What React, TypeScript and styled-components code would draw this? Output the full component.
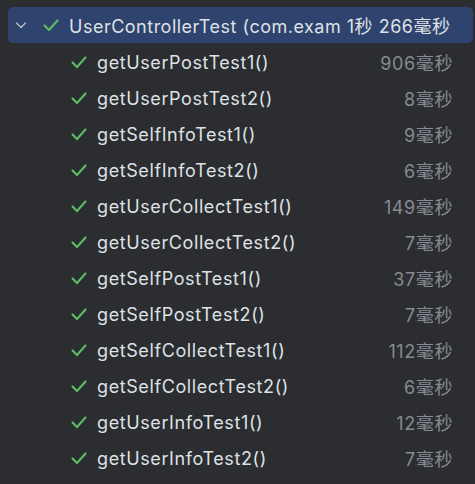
import React from "react";
import styled, { createGlobalStyle } from "styled-components";

const Global = createGlobalStyle`
  html, body { margin: 0; padding: 0; background: #2b2d30; }
  body { width: 475px; height: 484px; overflow: hidden; font-family: Inter, "Noto Sans CJK SC", sans-serif; }
`;

const Panel = styled.div`
  display: flex;
  flex-direction: column;
  padding: 7px 2px 0 8px;
  gap: 1px;
`;

const HeaderRow = styled.div`
  display: flex;
  align-items: center;
  height: 36px;
  background: #2e436e;
  border-radius: 5px;
  padding-left: 6px;
  color: #dfe1e5;
  font-size: 18px;
  white-space: nowrap;
  overflow: hidden;
`;

const Chevron = styled.svg`
  width: 14px;
  height: 14px;
  flex: none;
  margin-right: 14px;
`;

const Check = styled.svg`
  width: 18px;
  height: 18px;
  flex: none;
`;

const HeaderTitle = styled.span`
  margin-left: 9px;
  letter-spacing: 0.5px;
`;

const List = styled.div`
  display: flex;
  flex-direction: column;
`;

const Row = styled.div`
  display: flex;
  align-items: center;
  height: 36px;
  padding-left: 62px;
  padding-right: 20px;
  font-size: 18px;
  white-space: nowrap;
`;

const Name = styled.span`
  color: #dfe1e5;
  margin-left: 9px;
  flex: 1;
  letter-spacing: 0.6px;
`;

const Time = styled.span`
  color: #868a91;
  letter-spacing: 0.6px;
`;

const CheckIcon = () => (
  <Check viewBox="0 0 18 18">
    <path d="M2.5 9.5 L7 14 L15.5 4.5" fill="none" stroke="#5fb865" strokeWidth="2.2" strokeLinecap="round" strokeLinejoin="round" />
  </Check>
);

const tests: [string, string][] = [
  ["getUserPostTest1()", "906毫秒"],
  ["getUserPostTest2()", "8毫秒"],
  ["getSelfInfoTest1()", "9毫秒"],
  ["getSelfInfoTest2()", "6毫秒"],
  ["getUserCollectTest1()", "149毫秒"],
  ["getUserCollectTest2()", "7毫秒"],
  ["getSelfPostTest1()", "37毫秒"],
  ["getSelfPostTest2()", "7毫秒"],
  ["getSelfCollectTest1()", "112毫秒"],
  ["getSelfCollectTest2()", "6毫秒"],
  ["getUserInfoTest1()", "12毫秒"],
  ["getUserInfoTest2()", "7毫秒"],
];

export default function App() {
  return (
    <>
      <Global />
      <Panel>
        <HeaderRow>
          <Chevron viewBox="0 0 14 14">
            <path d="M2.5 5 L7 9.5 L11.5 5" fill="none" stroke="#b4b8bf" strokeWidth="1.4" strokeLinecap="round" strokeLinejoin="round" />
          </Chevron>
          <CheckIcon />
          <HeaderTitle>UserControllerTest (com.exam 1秒 266毫秒</HeaderTitle>
        </HeaderRow>
        <List>
          {tests.map(([n, t]) => (
            <Row key={n}>
              <CheckIcon />
              <Name>{n}</Name>
              <Time>{t}</Time>
            </Row>
          ))}
        </List>
      </Panel>
    </>
  );
}
